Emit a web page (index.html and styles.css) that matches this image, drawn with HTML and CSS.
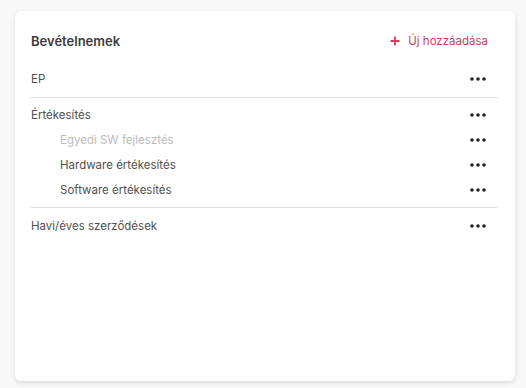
FILE: index.html
```html
<!doctype html>
<html lang="hu">
<head>
  <meta charset="UTF-8">
  <meta name="viewport" content="width=device-width, initial-scale=1.0">
  <title>Bevételnemek</title>
  <link rel="stylesheet" href="styles.css">
</head>
<body>
  <div class="card">
    <div class="card-header">
      <h2 class="card-title">Bevételnemek</h2>
      <button class="add-btn">
        <svg width="10" height="10" viewBox="0 0 10 10"><path d="M5 0.5v9M0.5 5h9" stroke="currentColor" stroke-width="1.8" fill="none"/></svg>
        <span>Új hozzáadása</span>
      </button>
    </div>

    <div class="group first">
      <div class="row">
        <span class="label">EP</span>
        <button class="more"><svg width="16" height="4" viewBox="0 0 16 4"><circle cx="2" cy="2" r="1.8"/><circle cx="8" cy="2" r="1.8"/><circle cx="14" cy="2" r="1.8"/></svg></button>
      </div>
    </div>

    <div class="group">
      <div class="row">
        <span class="label">Értékesítés</span>
        <button class="more"><svg width="16" height="4" viewBox="0 0 16 4"><circle cx="2" cy="2" r="1.8"/><circle cx="8" cy="2" r="1.8"/><circle cx="14" cy="2" r="1.8"/></svg></button>
      </div>
      <div class="row sub disabled">
        <span class="label">Egyedi SW fejlesztés</span>
        <button class="more"><svg width="16" height="4" viewBox="0 0 16 4"><circle cx="2" cy="2" r="1.8"/><circle cx="8" cy="2" r="1.8"/><circle cx="14" cy="2" r="1.8"/></svg></button>
      </div>
      <div class="row sub">
        <span class="label">Hardware értékesítés</span>
        <button class="more"><svg width="16" height="4" viewBox="0 0 16 4"><circle cx="2" cy="2" r="1.8"/><circle cx="8" cy="2" r="1.8"/><circle cx="14" cy="2" r="1.8"/></svg></button>
      </div>
      <div class="row sub">
        <span class="label">Software értékesítés</span>
        <button class="more"><svg width="16" height="4" viewBox="0 0 16 4"><circle cx="2" cy="2" r="1.8"/><circle cx="8" cy="2" r="1.8"/><circle cx="14" cy="2" r="1.8"/></svg></button>
      </div>
    </div>

    <div class="group last">
      <div class="row">
        <span class="label">Havi/éves szerződések</span>
        <button class="more"><svg width="16" height="4" viewBox="0 0 16 4"><circle cx="2" cy="2" r="1.8"/><circle cx="8" cy="2" r="1.8"/><circle cx="14" cy="2" r="1.8"/></svg></button>
      </div>
    </div>
  </div>
</body>
</html>
```

FILE: styles.css
```css
body {
  margin: 0;
  padding: 11px 11px 8px 15px;
  background: #f8f8f8;
  font-family: Inter, "Noto Sans", sans-serif;
  color: #555;
}
.card {
  width: 500px;
  height: 370px;
  box-sizing: border-box;
  background: #fff;
  border-radius: 6px;
  box-shadow: 0 2px 5px rgba(0, 0, 0, 0.12);
  padding: 18px 17px 0 15px;
}
.card-header {
  display: flex;
  align-items: center;
  justify-content: space-between;
  height: 24px;
  margin-bottom: 8px;
}
.card-title {
  margin: 0 0 0 1px;
  font-size: 13px;
  font-weight: 600;
  color: #3d3d3d;
}
.add-btn {
  display: flex;
  align-items: center;
  gap: 8px;
  border: none;
  background: none;
  padding: 0 10px 0 0;
  font-family: inherit;
  font-size: 11.5px;
  color: #cc3d5e;
  cursor: pointer;
}
.add-btn svg {
  color: #d83c5c;
}
.group {
  padding: 4px 0 5px;
  border-bottom: 1px solid #e2e2e2;
}
.group.first {
  padding: 5px 0 6px;
}
.group.last {
  padding-top: 5px;
  border-bottom: none;
}
.row {
  display: flex;
  align-items: center;
  justify-content: space-between;
  height: 25px;
  padding-left: 1px;
}
.label {
  font-size: 11.5px;
  color: #505050;
}
.row.sub .label {
  padding-left: 29px;
}
.row.disabled .label {
  color: #bcbcbc;
}
.more {
  display: flex;
  align-items: center;
  justify-content: center;
  width: 28px;
  height: 22px;
  margin-right: 6px;
  padding: 0;
  border: none;
  background: none;
  cursor: pointer;
  fill: #222;
}
```
